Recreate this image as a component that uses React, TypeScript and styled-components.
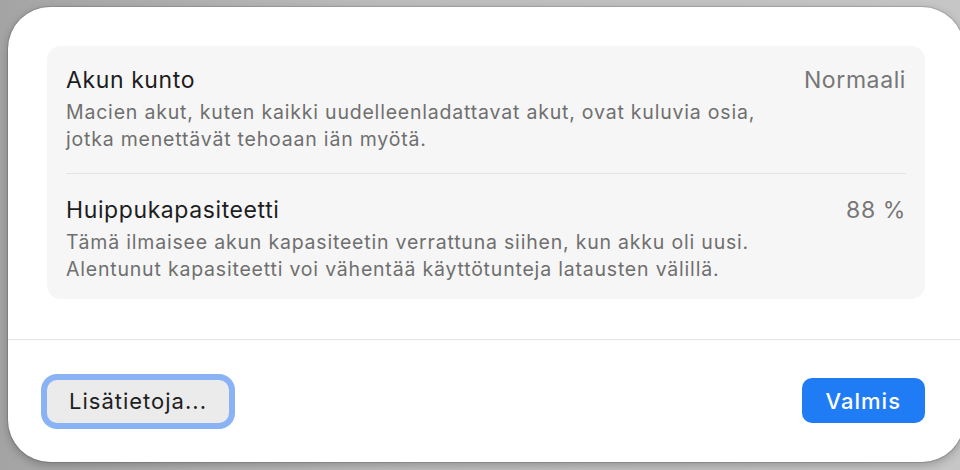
import styled, { createGlobalStyle } from "styled-components";

const GlobalStyle = createGlobalStyle`
  html, body {
    margin: 0;
    padding: 0;
    height: 100%;
    overflow: hidden;
  }
  body {
    background: linear-gradient(to right, #a4a4a4 0%, #bdbdbd 40%, #c6c6c6 100%);
    font-family: Inter, "Noto Sans", "Liberation Sans", sans-serif;
    -webkit-font-smoothing: antialiased;
  }
`;

const Backdrop = styled.div`
  width: 960px;
  height: 470px;
  padding: 7px 0 0 8px;
  box-sizing: border-box;
`;

const Sheet = styled.div`
  width: 956px;
  height: 455px;
  background: #ffffff;
  border-radius: 42px;
  box-shadow: 0 0 0 1px rgba(0, 0, 0, 0.12), 0 3px 10px rgba(0, 0, 0, 0.25);
  display: flex;
  flex-direction: column;
  overflow: hidden;
`;

const Body = styled.div`
  padding: 39px 39px 40px;
`;

const Card = styled.div`
  background: #f6f6f6;
  border-radius: 14px;
  padding: 0 19px;
`;

const Row = styled.div<{ $first?: boolean }>`
  padding: ${({ $first }) => ($first ? "20px 0 20px" : "22px 0 16px")};
  border-top: ${({ $first }) => ($first ? "none" : "1px solid #e3e3e3")};
`;

const Head = styled.div`
  display: flex;
  justify-content: space-between;
  align-items: center;
  height: 28px;
`;

const Title = styled.span`
  font-size: 23px;
  letter-spacing: 0.6px;
  color: #1d1d1f;
`;

const Value = styled.span`
  font-size: 23px;
  letter-spacing: 0.6px;
  color: #767676;
`;

const Desc = styled.p`
  margin: 5px 0 0;
  font-size: 19.5px;
  letter-spacing: 0.8px;
  line-height: 27px;
  color: #6f6f6f;
`;

const Footer = styled.div`
  border-top: 1px solid #e2e2e2;
  display: flex;
  justify-content: space-between;
  align-items: center;
  padding: 38px 39px 0;
`;

const Button = styled.button<{ $primary?: boolean; $focused?: boolean }>`
  font-family: inherit;
  font-size: 22px;
  letter-spacing: 1px;
  border: none;
  border-radius: 10px;
  height: ${({ $primary }) => ($primary ? "45px" : "43px")};
  margin-top: ${({ $primary }) => ($primary ? "0" : "1px")};
  padding: 0 ${({ $primary }) => ($primary ? "24px" : "22px")};
  min-width: ${({ $primary }) => ($primary ? "122px" : "182px")};
  background: ${({ $primary }) => ($primary ? "#1f7cf5" : "#ebebeb")};
  color: ${({ $primary }) => ($primary ? "#ffffff" : "#1e1e1e")};
  font-weight: ${({ $primary }) => ($primary ? 500 : 400)};
  box-shadow: ${({ $focused }) => ($focused ? "0 0 0 6px #8ab3f6" : "none")};
`;

const rows = [
  {
    title: "Akun kunto",
    value: "Normaali",
    lines: [
      "Macien akut, kuten kaikki uudelleenladattavat akut, ovat kuluvia osia,",
      "jotka menettävät tehoaan iän myötä.",
    ],
  },
  {
    title: "Huippukapasiteetti",
    value: "88 %",
    lines: [
      "Tämä ilmaisee akun kapasiteetin verrattuna siihen, kun akku oli uusi.",
      "Alentunut kapasiteetti voi vähentää käyttötunteja latausten välillä.",
    ],
  },
];

export default function App() {
  return (
    <>
      <GlobalStyle />
      <Backdrop>
        <Sheet>
          <Body>
            <Card>
              {rows.map((row, i) => (
                <Row key={row.title} $first={i === 0}>
                  <Head>
                    <Title>{row.title}</Title>
                    <Value>{row.value}</Value>
                  </Head>
                  <Desc>
                    {row.lines[0]}
                    <br />
                    {row.lines[1]}
                  </Desc>
                </Row>
              ))}
            </Card>
          </Body>
          <Footer>
            <Button $focused>Lisätietoja...</Button>
            <Button $primary>Valmis</Button>
          </Footer>
        </Sheet>
      </Backdrop>
    </>
  );
}
